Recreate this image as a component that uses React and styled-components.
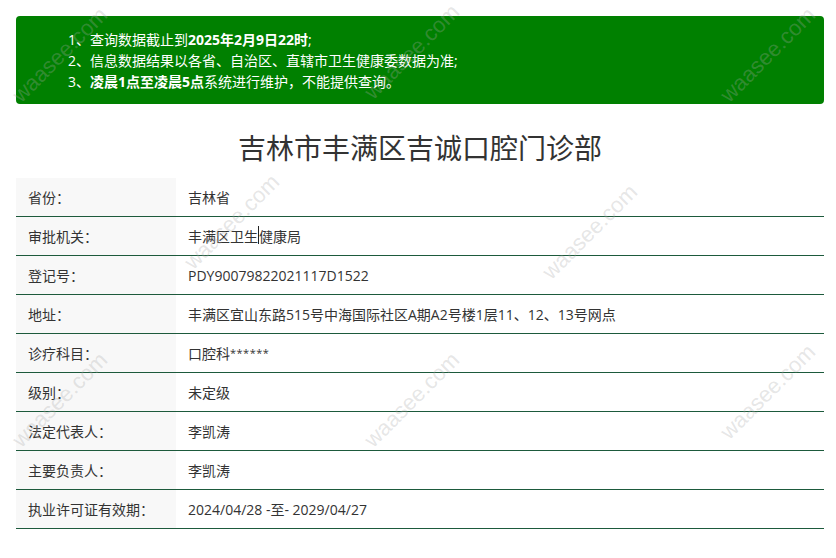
import React from "react";
import styled, { createGlobalStyle } from "styled-components";

const GlobalStyle = createGlobalStyle`
  html, body {
    margin: 0;
    padding: 0;
    background: #ffffff;
  }
  body {
    font-family: "Open Sans", "Noto Sans CJK SC", sans-serif;
    color: #333333;
  }
`;

const Page = styled.div`
  position: relative;
  width: 836px;
  height: 558px;
  overflow: hidden;
  padding: 16px 12px 0 16px;
  box-sizing: border-box;
`;

const Notice = styled.div`
  background: #008000;
  border-radius: 4px;
  padding: 13px 16px 12px 52px;
  color: #ffffff;
  font-size: 14px;
  line-height: 21px;
`;

const NoticeLine = styled.div`
  white-space: nowrap;
`;

const Strong = styled.b`
  font-weight: 700;
`;

const Title = styled.h1`
  margin: 24px 0 10px;
  font-size: 28px;
  line-height: 40px;
  font-weight: 400;
  text-align: center;
  color: #333333;
`;

const Table = styled.div`
  display: grid;
  grid-template-columns: 160px 1fr;
`;

const Row = styled.div`
  display: contents;
`;

const Cell = styled.div`
  height: 38px;
  display: flex;
  align-items: center;
  padding-left: 12px;
  font-size: 14px;
  color: #333333;
  border-bottom: 1px solid #1d5a3c;
  background: ${({ $label }) => ($label ? "#f8f8f8" : "#ffffff")};
  white-space: nowrap;
`;

const Stars = styled.span`
  font-size: 11px;
  align-self: flex-start;
  margin-top: 11px;
  letter-spacing: 0.5px;
`;

const Caret = styled.span`
  display: inline-block;
  width: 1px;
  height: 18px;
  background: #222222;
  vertical-align: middle;
  margin-bottom: 2px;
`;

const WatermarkLayer = styled.div`
  position: absolute;
  inset: 0;
  pointer-events: none;
`;

const Watermark = styled.span`
  position: absolute;
  font-family: "Liberation Sans", Arial, sans-serif;
  font-size: 22px;
  color: rgba(170, 170, 170, 0.3);
  transform: translate(-50%, -50%) rotate(-45deg);
  white-space: nowrap;
`;

const rows = [
  ["省份：", "吉林省"],
  ["审批机关：", <>丰满区卫生<Caret />健康局</>],
  ["登记号：", "PDY90079822021117D1522"],
  ["地址：", "丰满区宜山东路515号中海国际社区A期A2号楼1层11、12、13号网点"],
  ["诊疗科目：", <>口腔科<Stars>******</Stars></>],
  ["级别：", "未定级"],
  ["法定代表人：", "李凯涛"],
  ["主要负责人：", "李凯涛"],
  ["执业许可证有效期：", "2024/04/28 -至- 2029/04/27"],
];

const marks = [
  [60, 55], [412, 52], [768, 55],
  [232, 222], [590, 232],
  [60, 400], [412, 400], [768, 392],
];

export default function App() {
  return (
    <>
      <GlobalStyle />
      <Page>
        <Notice>
          <NoticeLine>
            1、查询数据截止到<Strong>2025年2月9日22时</Strong>;
          </NoticeLine>
          <NoticeLine>
            2、信息数据结果以各省、自治区、直辖市卫生健康委数据为准;
          </NoticeLine>
          <NoticeLine>
            3、<Strong>凌晨1点至凌晨5点</Strong>系统进行维护，不能提供查询。
          </NoticeLine>
        </Notice>
        <Title>吉林市丰满区吉诚口腔门诊部</Title>
        <Table>
          {rows.map(([label, value], i) => (
            <Row key={i}>
              <Cell $label>{label}</Cell>
              <Cell>{value}</Cell>
            </Row>
          ))}
        </Table>
        <WatermarkLayer>
          {marks.map(([x, y], i) => (
            <Watermark key={i} style={{ left: x, top: y }}>
              waasee.com
            </Watermark>
          ))}
        </WatermarkLayer>
      </Page>
    </>
  );
}
